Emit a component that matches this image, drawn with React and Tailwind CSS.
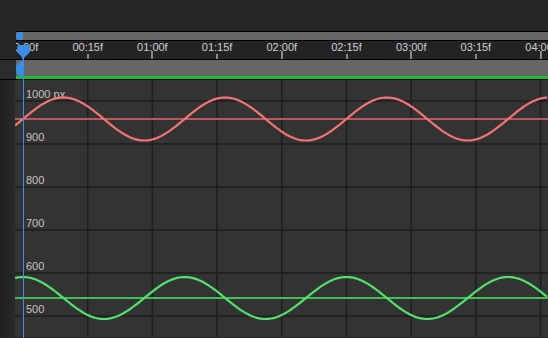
const W = 533;
const H = 257;
const FRAME_PX = 64.7;
const PERIOD = 161.7;
const ORIGIN = 23;

const ticks = [
  { label: "00:00f", major: true },
  { label: "00:15f", major: false },
  { label: "01:00f", major: true },
  { label: "01:15f", major: false },
  { label: "02:00f", major: true },
  { label: "02:15f", major: false },
  { label: "03:00f", major: true },
  { label: "03:15f", major: false },
  { label: "04:00f", major: true },
];

const rows = [
  { value: "1000 px", y: 21 },
  { value: "900", y: 64 },
  { value: "800", y: 107 },
  { value: "700", y: 150 },
  { value: "600", y: 193 },
  { value: "500", y: 236 },
];

function wave(center, amp, fn) {
  const pts = [];
  for (let x = 0; x <= W; x += 2) {
    const t = (2 * Math.PI * (x + 15 - ORIGIN)) / PERIOD;
    pts.push(`${x},${(center - amp * fn(t)).toFixed(2)}`);
  }
  return "M" + pts.join(" L");
}

function Graph() {
  return (
    <svg width={W} height={H} className="block">
      <rect width={W} height={H} fill="#333333" />
      {ticks.slice(1).map((_, i) => {
        const x = ORIGIN - 15 + FRAME_PX * (i + 1);
        return <line key={i} x1={x} y1={0} x2={x} y2={H} stroke="#1e1e1e" strokeWidth="1.5" />;
      })}
      {rows.map((r) => (
        <line key={r.value} x1={0} y1={r.y} x2={W} y2={r.y} stroke="#1e1e1e" strokeWidth="1.5" />
      ))}
      {rows.map((r) => (
        <text key={r.value + "t"} x={11} y={r.y - 3} fill="#c4c4c4" fontSize="11">
          {r.value}
        </text>
      ))}
      <line x1={0} y1={39} x2={W} y2={39} stroke="#b85a5a" strokeWidth="2" />
      <path d={wave(39, 21.5, Math.sin)} fill="none" stroke="#f27474" strokeWidth="2.2" />
      <line x1={0} y1={218} x2={W} y2={218} stroke="#3fbf52" strokeWidth="2" />
      <path d={wave(218, 21, Math.cos)} fill="none" stroke="#52e26e" strokeWidth="2.2" />
    </svg>
  );
}

export default function App() {
  return (
    <div className="relative w-[548px] h-[338px] overflow-hidden bg-[#262626] font-['Liberation_Sans_Narrow','Liberation_Sans',sans-serif] select-none">
      <div className="h-[31px]" />

      <div className="flex h-[10px]">
        <div className="w-[16px]" />
        <div className="flex-1 bg-[#666666] border-y border-black" />
      </div>

      <div className="flex h-[19px] border-b border-black">
        <div className="w-[16px]" />
        <div className="relative flex-1 overflow-hidden bg-[#232323]">
          {ticks.map((t, i) => {
            const x = ORIGIN - 16 + FRAME_PX * i;
            return (
              <div key={t.label}>
                <span
                  className="absolute top-[1px] -translate-x-1/2 text-[11px] leading-[11px] text-[#cfcfcf]"
                  style={{ left: x }}
                >
                  {t.label}
                </span>
                <span
                  className={`absolute bottom-0 w-[2px] bg-[#8a8a8a] ${t.major ? "h-[8px]" : "h-[5px]"}`}
                  style={{ left: x - 1 }}
                />
              </div>
            );
          })}
        </div>
      </div>

      <div className="flex h-[20px] border-b border-black">
        <div className="w-[16px] bg-[#2c2c2c]" />
        <div className="flex-1 flex flex-col">
          <div className="flex-1 bg-[#666666]" />
          <div className="h-[3px] bg-[#1fc030]" />
        </div>
      </div>

      <div className="flex">
        <div className="w-[15px] h-[257px] bg-gradient-to-r from-[#1d1d1d] to-[#2a2a2a]" />
        <Graph />
      </div>

      {/* playhead */}
      <div className="absolute left-[16px] top-[32px] w-[7px] h-[8px] rounded-l-full bg-[#3a8ee8]" />
      <div className="absolute left-[16px] top-[61px] w-[7px] h-[16px] rounded-l-full bg-[#3a8ee8]" />
      <div className="absolute left-[23px] top-[45px] bottom-0 w-px bg-[#3a8ee8]" />
      <svg className="absolute left-[17px] top-[45px]" width="13" height="14">
        <path d="M0 3 Q0 0 3 0 L10 0 Q13 0 13 3 L13 7 L6.5 13.5 L0 7 Z" fill="#3a8ee8" />
      </svg>
    </div>
  );
}
